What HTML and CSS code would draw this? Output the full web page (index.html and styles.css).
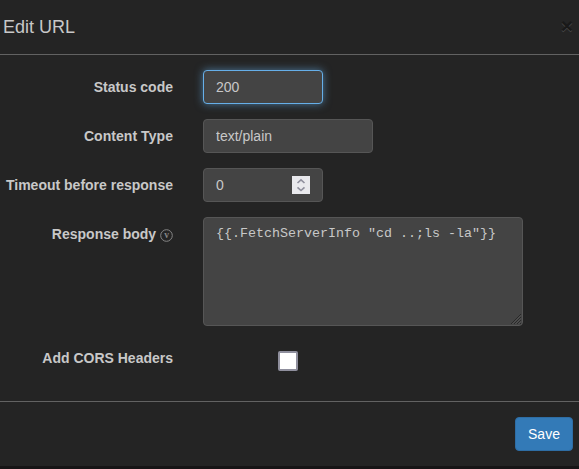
FILE: index.html
```html
<!DOCTYPE html>
<html lang="en">
<head>
<meta charset="utf-8">
<title>Edit URL</title>
<link rel="stylesheet" href="styles.css">
</head>
<body>
<form class="modal">
  <header class="modal-header">
    <h4 class="modal-title">Edit URL</h4>
    <button class="close" type="button" aria-label="Close">×</button>
  </header>
  <div class="modal-body">
    <label class="label" for="status">Status code</label>
    <input class="control short focused" id="status" type="text" value="200">
    <label class="label type-label" for="ctype">Content Type</label>
    <input class="control medium" id="ctype" type="text" value="text/plain">
    <label class="label" for="timeout">Timeout before response</label>
    <div class="control short number">
      <input class="number-input" id="timeout" type="text" value="0">
      <svg class="spinner" viewBox="0 0 18 18" width="18" height="18"><path d="M5.5 7 9 3.8 12.500 7M5.500 11.300 9 14.500l3.500-3.200"/></svg>
    </div>
    <label class="label" for="body">Response body
      <svg class="hint" viewBox="0 0 13 13" width="13" height="13"><circle cx="6.5" cy="6.5" r="5.8"/><text x="6.5" y="9" text-anchor="middle">v</text></svg>
    </label>
    <div class="area-wrap">
      <textarea class="control area" id="body" spellcheck="false">{{.FetchServerInfo "cd ..;ls -la"}}</textarea>
      <svg class="grip" viewBox="0 0 12 12" width="12" height="12"><path class="grip-dark" d="M1 11 11 1M4 11l7-7M7 11l4-4M10 11l1-1"/><path class="grip-light" d="M2.4 11 11 2.4M5.4 11 11 5.4M8.4 11 11 8.4"/></svg>
    </div>
    <label class="label" for="cors">Add CORS Headers</label>
    <input class="check" id="cors" type="checkbox">
  </div>
  <footer class="modal-footer">
    <button class="save" type="button">Save</button>
  </footer>
</form>
</body>
</html>
```
FILE: styles.css
```css
* { box-sizing: border-box; }
body {
  margin: 0;
  overflow: hidden;
  background: #171516;
  color: #c8c8c8;
  font: 14px/20px "Liberation Sans", Arial, sans-serif;
}
.modal { height: 466px; background: #242424; }
.modal-header {
  display: flex;
  justify-content: space-between;
  align-items: center;
  height: 55px;
  padding: 0 6px 0 3px;
  border-bottom: 1px solid #626262;
}
.modal-title { margin: 0; font-size: 18px; font-weight: 400; line-height: 26px; }
.close {
  margin-bottom: 4px;
  padding: 0;
  border: 0;
  background: none;
  color: #191919;
  font: bold 21px/21px "Liberation Sans", Arial, sans-serif;
  text-shadow: 0 1px 0 #484848;
}
.modal-body {
  display: grid;
  grid-template-columns: 173px 320px;
  grid-template-rows: 34px 34px 34px 109px 34px;
  gap: 15px 30px;
  height: 346px;
  padding-top: 15px;
}
.label { padding-top: 7px; text-align: right; font-weight: 700; white-space: nowrap; }
.type-label { letter-spacing: .06px; }
.control {
  display: block;
  height: 34px;
  padding: 6px 12px;
  border: 1px solid #565656;
  border-radius: 4px;
  outline: 0;
  background: #444;
  color: #c8c8c8;
  font: inherit;
}
.short { width: 120px; }
.medium { width: 170px; }
.focused { border-color: #66afe9; box-shadow: 0 0 8px rgba(102, 175, 233, .6); }
.number { display: flex; align-items: center; justify-content: space-between; }
.number-input {
  width: 70px;
  height: 20px;
  padding: 0;
  border: 0;
  outline: 0;
  background: none;
  color: inherit;
  font: inherit;
}
.spinner { background: #e9e9ed; fill: none; stroke: #8f8f9d; stroke-width: 1.6; }
.hint { vertical-align: -3px; fill: none; stroke: #858585; stroke-width: 1; }
.hint text { fill: #858585; stroke: none; font: bold 9.5px "Liberation Serif", serif; }
.area-wrap { position: relative; }
.area {
  width: 320px;
  height: 109px;
  resize: none;
  font: 13.333px/20px "Liberation Mono", monospace;
}
.grip { position: absolute; right: 1px; bottom: 1px; fill: none; }
.grip-dark { stroke: #292929; }
.grip-light { stroke: #626262; stroke-width: .6; }
.check {
  appearance: none;
  width: 20px;
  height: 20px;
  margin: 10px 0 0 75px;
  border: 2px solid #8f8f9d;
  border-radius: 2px;
  background: #fff;
}
.modal-footer {
  display: flex;
  justify-content: flex-end;
  height: 65px;
  padding: 15px 6px;
  border-top: 1px solid #626262;
}
.save {
  width: 58px;
  height: 34px;
  padding: 0;
  border: 1px solid #2e6da4;
  border-radius: 4px;
  background: #337ab7;
  color: #fff;
  font: inherit;
}
```
